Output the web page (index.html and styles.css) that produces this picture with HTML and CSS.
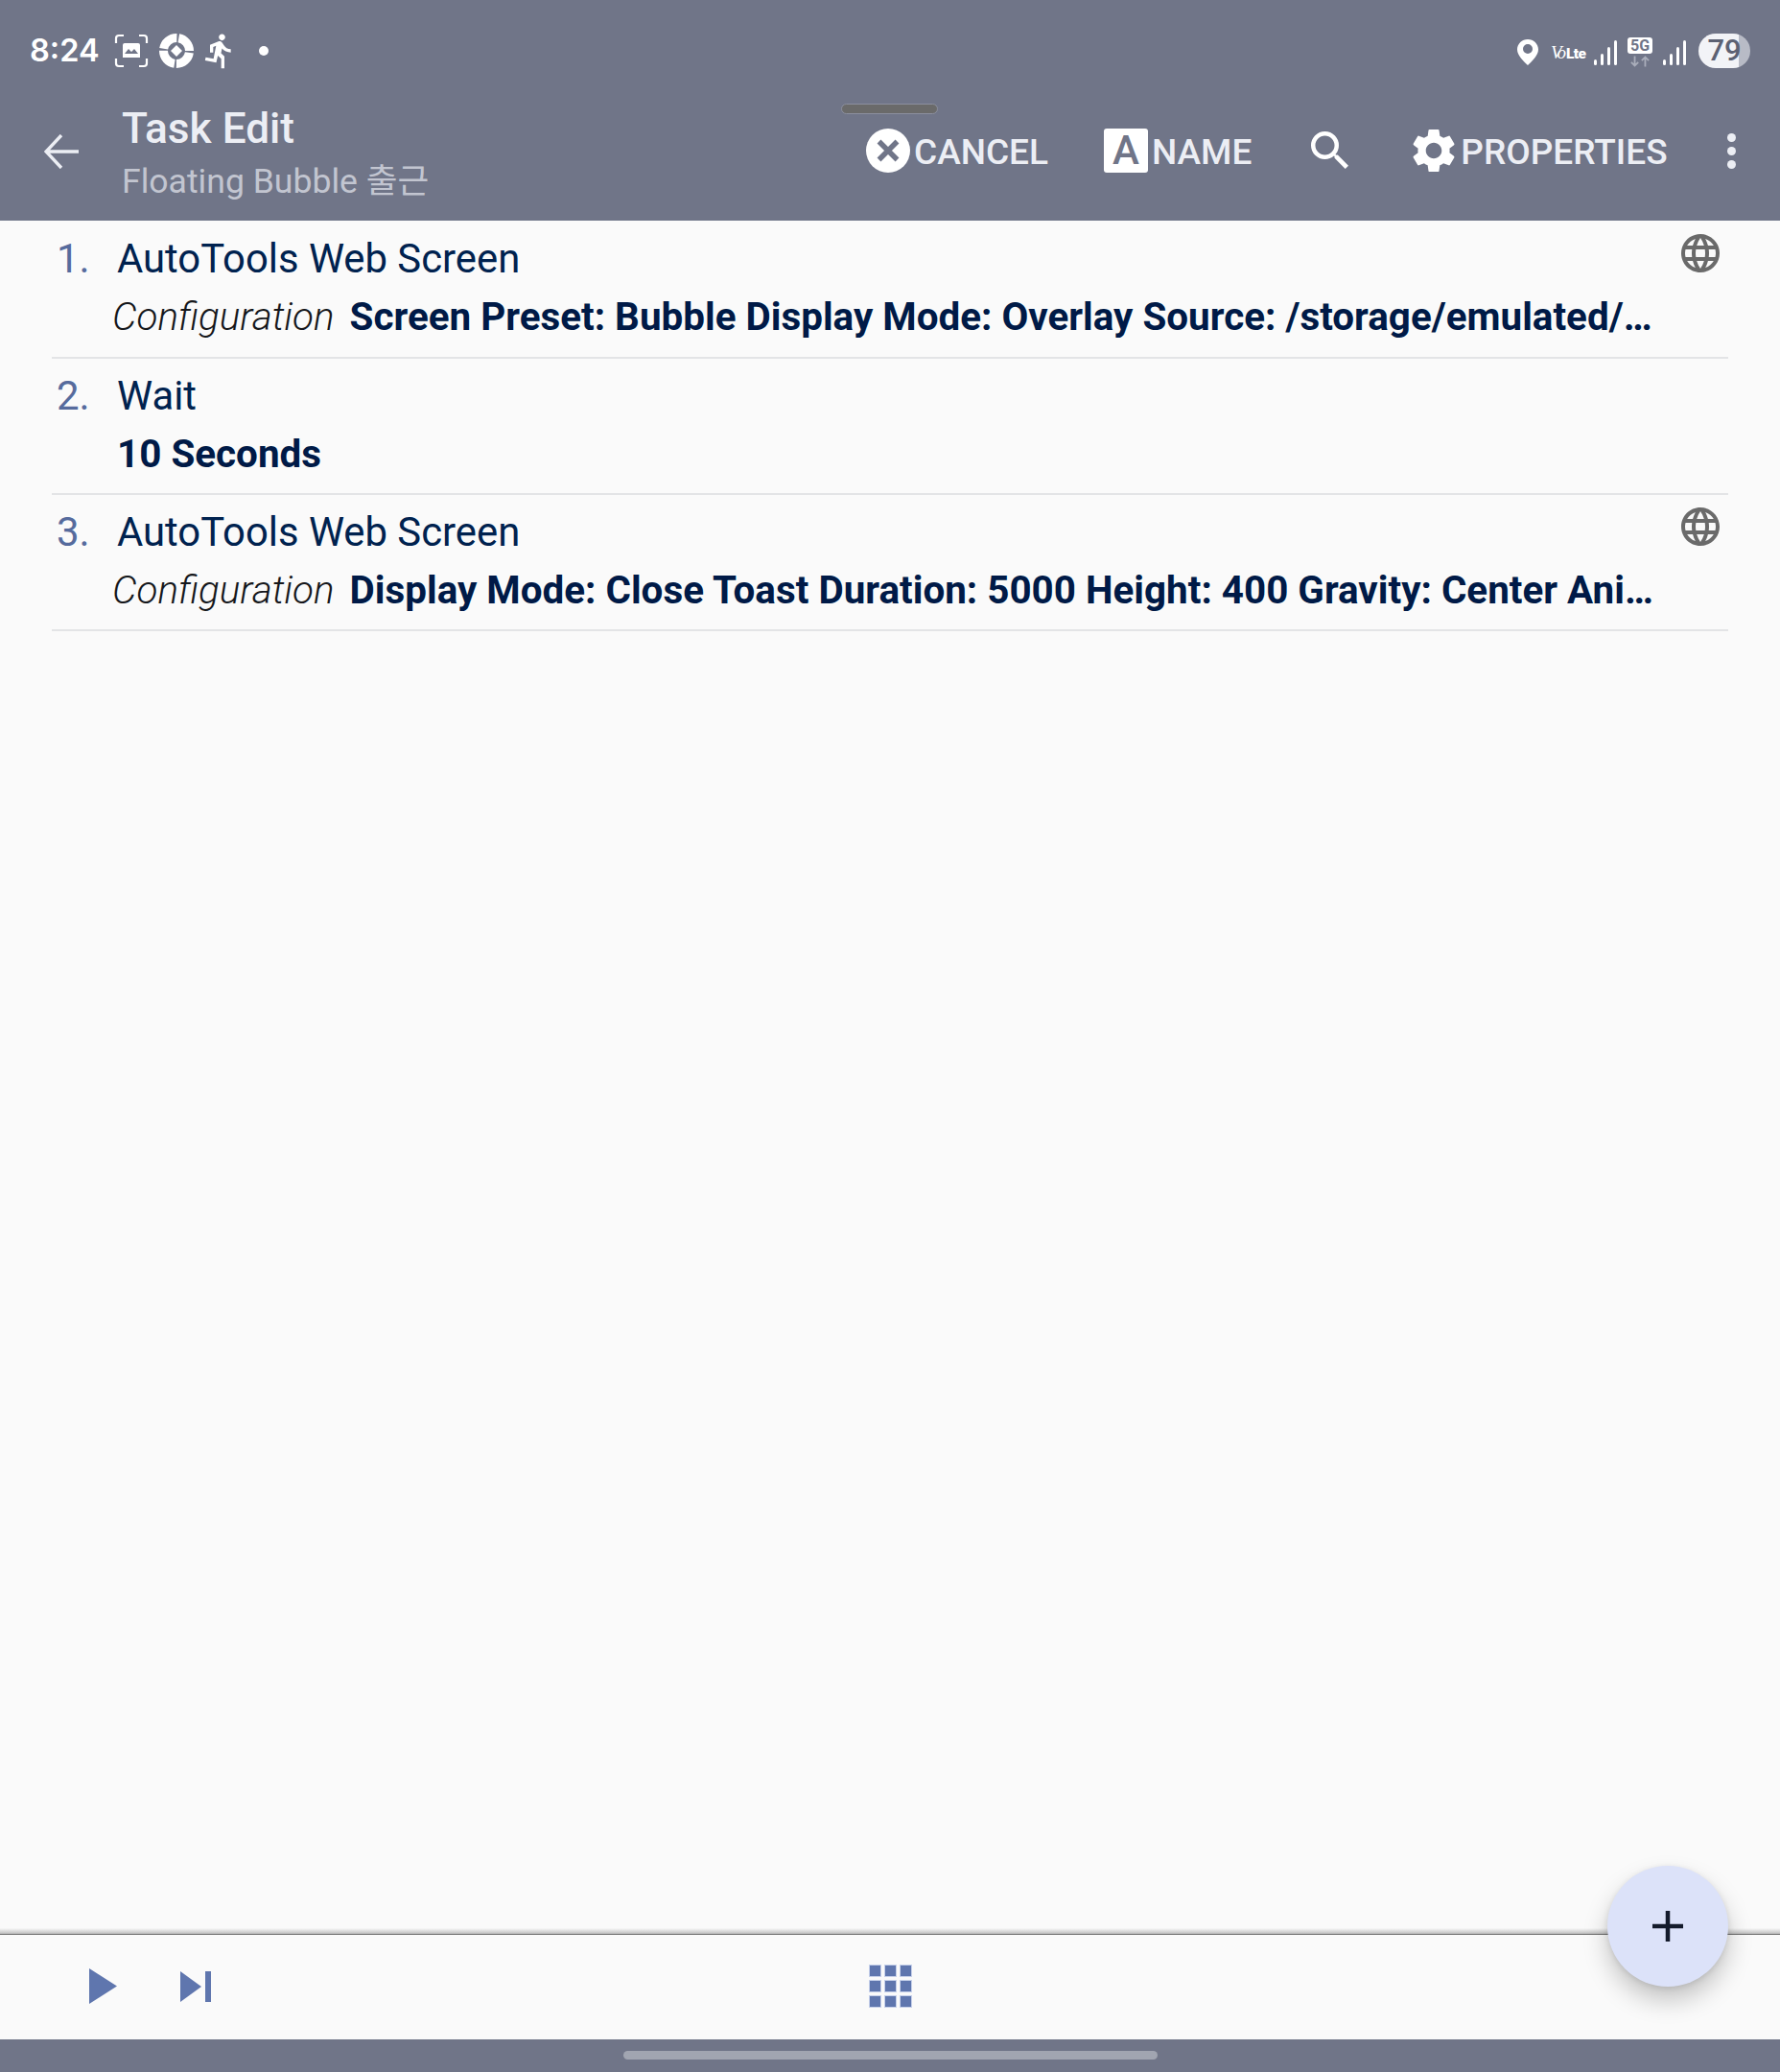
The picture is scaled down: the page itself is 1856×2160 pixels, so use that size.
FILE: index.html
```html
<!DOCTYPE html>
<html lang="en">
<head>
<meta charset="utf-8">
<title>Task Edit</title>
<link rel="stylesheet" href="styles.css">
</head>
<body>
<div class="page">
  <header class="header">
    <div class="status">
      <div class="status-left">
        <span class="time">8:24</span>
        <svg class="ic-shot" viewBox="0 0 36 36"><path d="M2 10V5a3 3 0 0 1 3-3h5M26 2h5a3 3 0 0 1 3 3v5M34 26v5a3 3 0 0 1-3 3h-5M10 34H5a3 3 0 0 1-3-3v-5" fill="none" stroke="#fff" stroke-width="2.2"/><path d="M9 12a2 2 0 0 1 2-2h14a2 2 0 0 1 2 2v13H9z" fill="#fff"/><path d="M11 21l4-5 3 3 3-3 4 5z" fill="#707588"/></svg>
        <svg class="ic-target" viewBox="0 0 36 36"><circle cx="18" cy="18" r="13.5" fill="none" stroke="#fff" stroke-width="9" stroke-dasharray="19.2 2" stroke-dashoffset="-2"/><path d="M18 12l6 6-6 6-6-6z" fill="#fff"/></svg>
        <svg class="ic-run" viewBox="0 0 24 24"><path fill="#fff" d="M13.49 5.48c1.1 0 2-.9 2-2s-.9-2-2-2-2 .9-2 2 .9 2 2 2zm-3.6 13.9l1-4.4 2.1 2v6h2v-7.5l-2.1-2 .6-3c1.3 1.5 3.3 2.5 5.5 2.5v-2c-1.9 0-3.5-1-4.3-2.4l-1-1.6c-.4-.6-1-1-1.7-1-.3 0-.5.1-.8.1l-5.2 2.2v4.7h2v-3.4l1.8-.7-1.6 8.1-4.9-1-.4 2 7 1.4z"/></svg>
        <span class="status-dot"></span>
      </div>
      <div class="status-right">
        <svg class="ic-pin" viewBox="0 0 22 27"><path fill="#fff" fill-rule="evenodd" d="M11 0C5 0 0 4.700 0 10.500 0 17 7 23 11 27c4-4 11-10 11-16.500C22 4.700 17 0 11 0zm0 15a5 5 0 1 1 0-10 5 5 0 0 1 0 10z"/></svg>
        <span class="volte"><i>Vo</i><b>Lte</b></span>
        <svg class="ic-signal" viewBox="0 0 24 26"><rect x="0" y="20" width="3" height="6" rx="1.500"/><rect x="7" y="14" width="3" height="12" rx="1.500"/><rect x="14" y="7" width="3" height="19" rx="1.500"/><rect x="21" y="0" width="3" height="26" rx="1.500"/></svg>
        <span class="fiveg"><span class="fiveg-label">5G</span><svg class="ic-arrows" viewBox="0 0 22 12"><path d="M5 0v10M1 7l4 4 4-4M17 12V2M13 5l4-4 4 4" fill="none" stroke="#a9adba" stroke-width="2"/></svg></span>
        <svg class="ic-signal" viewBox="0 0 24 26"><rect x="0" y="20" width="3" height="6" rx="1.500"/><rect x="7" y="14" width="3" height="12" rx="1.500"/><rect x="14" y="7" width="3" height="19" rx="1.500"/><rect x="21" y="0" width="3" height="26" rx="1.500"/></svg>
        <span class="battery">79</span>
      </div>
    </div>
    <div class="appbar">
      <svg class="ic-back" viewBox="0 0 36 36"><path d="M36 18H3M18 1L2 18l16 17" fill="none" stroke="#eceef4" stroke-width="3.400"/></svg>
      <div class="titles">
        <div class="title">Task Edit</div>
        <div class="subtitle">Floating Bubble 출근</div>
      </div>
      <div class="actions">
        <div class="action action-cancel">
          <svg class="ic-cancel" viewBox="0 0 46 46"><circle cx="23" cy="23" r="23" fill="#fff"/><path d="M13.500 13.500l19 19M32.500 13.500l-19 19" stroke="#707588" stroke-width="5.500"/></svg>
          <span class="action-text">CANCEL</span>
        </div>
        <div class="action action-name">
          <span class="name-box">A</span>
          <span class="action-text">NAME</span>
        </div>
        <svg class="ic-search" viewBox="3 3 17.490 17.490"><path fill="#fff" d="M15.500 14h-.79l-.28-.27A6.471 6.471 0 0 0 16 9.500 6.500 6.500 0 1 0 9.500 16c1.610 0 3.090-.59 4.230-1.570l.27.28v.79l5 4.990L20.490 19l-4.990-5zm-6 0C7.010 14 5 11.990 5 9.500S7.010 5 9.500 5 14 7.010 14 9.500 11.990 14 9.500 14z"/></svg>
        <div class="action action-props">
          <svg class="ic-gear" viewBox="2.500 2 19 20"><path fill="#fff" d="M19.140 12.940c.04-.3.06-.61.06-.94 0-.32-.02-.64-.07-.94l2.030-1.580a.49.49 0 0 0 .12-.61l-1.920-3.320a.488.488 0 0 0-.59-.22l-2.390.96c-.5-.38-1.030-.7-1.620-.94l-.36-2.540a.484.484 0 0 0-.48-.41h-3.840c-.24 0-.43.17-.47.41l-.36 2.540c-.59.24-1.130.57-1.620.94l-2.390-.96c-.22-.08-.47 0-.59.22L2.740 8.870c-.12.21-.08.47.12.61l2.030 1.580c-.05.3-.09.63-.09.94s.02.64.07.94l-2.030 1.580a.49.49 0 0 0-.12.61l1.920 3.320c.12.22.37.29.59.22l2.390-.96c.5.38 1.030.7 1.620.94l.36 2.540c.05.24.24.41.48.41h3.840c.24 0 .44-.17.47-.41l.36-2.540c.59-.24 1.130-.56 1.620-.94l2.390.96c.22.08.47 0 .59-.22l1.920-3.320c.12-.22.07-.47-.12-.61l-2.010-1.580zM12 15.600c-1.980 0-3.600-1.620-3.600-3.600s1.620-3.600 3.600-3.600 3.600 1.620 3.600 3.600-1.620 3.600-3.600 3.600z"/></svg>
          <span class="action-text">PROPERTIES</span>
        </div>
        <span class="overflow"><i></i><i></i><i></i></span>
      </div>
    </div>
    <span class="handle"></span>
  </header>

  <main class="list">
    <section class="row">
      <div class="row-head">
        <span class="num">1.</span>
        <span class="name">AutoTools Web Screen</span>
        <svg class="ic-globe" viewBox="2 2 20 20"><path fill="#6a6a6a" d="M11.990 2C6.470 2 2 6.480 2 12s4.470 10 9.990 10C17.520 22 22 17.520 22 12S17.520 2 11.990 2zm6.930 6h-2.950c-.32-1.250-.78-2.450-1.380-3.560 1.840.63 3.370 1.910 4.330 3.560zM12 4.040c.83 1.200 1.480 2.530 1.910 3.960h-3.820c.43-1.430 1.080-2.760 1.910-3.960zM4.260 14C4.100 13.360 4 12.690 4 12s.1-1.360.26-2h3.380c-.08.66-.14 1.320-.14 2s.06 1.340.14 2H4.260zm.82 2h2.950c.32 1.250.78 2.450 1.380 3.560-1.840-.63-3.370-1.900-4.330-3.560zm2.950-8H5.080c.96-1.660 2.490-2.930 4.330-3.560C8.810 5.550 8.350 6.750 8.030 8zM12 19.960c-.83-1.200-1.480-2.530-1.910-3.960h3.820c-.43 1.430-1.080 2.760-1.910 3.960zM14.340 14H9.660c-.09-.66-.16-1.320-.16-2s.07-1.350.16-2h4.680c.09.65.16 1.320.16 2s-.07 1.340-.16 2zm.25 5.560c.6-1.110 1.060-2.310 1.380-3.560h2.950c-.96 1.650-2.490 2.930-4.330 3.560zM16.360 14c.08-.66.14-1.320.14-2s-.06-1.340-.14-2h3.380c.16.64.26 1.310.26 2s-.1 1.360-.26 2h-3.380z"/></svg>
      </div>
      <div class="row-detail">
        <span class="label">Configuration</span>
        <span class="value">Screen Preset: Bubble Display Mode: Overlay Source: /storage/emulated/…</span>
      </div>
    </section>
    <section class="row">
      <div class="row-head">
        <span class="num">2.</span>
        <span class="name">Wait</span>
      </div>
      <div class="row-detail row-detail-plain">
        <span class="value">10 Seconds</span>
      </div>
    </section>
    <section class="row">
      <div class="row-head">
        <span class="num">3.</span>
        <span class="name">AutoTools Web Screen</span>
        <svg class="ic-globe" viewBox="2 2 20 20"><path fill="#6a6a6a" d="M11.990 2C6.470 2 2 6.480 2 12s4.470 10 9.990 10C17.520 22 22 17.520 22 12S17.520 2 11.990 2zm6.930 6h-2.950c-.32-1.250-.78-2.450-1.380-3.560 1.840.63 3.370 1.910 4.330 3.560zM12 4.040c.83 1.200 1.480 2.530 1.910 3.960h-3.820c.43-1.430 1.080-2.760 1.910-3.960zM4.260 14C4.100 13.360 4 12.690 4 12s.1-1.360.26-2h3.380c-.08.66-.14 1.320-.14 2s.06 1.340.14 2H4.260zm.82 2h2.950c.32 1.250.78 2.450 1.380 3.560-1.840-.63-3.370-1.900-4.330-3.560zm2.950-8H5.080c.96-1.660 2.490-2.930 4.330-3.560C8.810 5.550 8.350 6.750 8.030 8zM12 19.960c-.83-1.200-1.480-2.530-1.910-3.960h3.820c-.43 1.430-1.080 2.760-1.910 3.960zM14.340 14H9.660c-.09-.66-.16-1.320-.16-2s.07-1.350.16-2h4.680c.09.65.16 1.320.16 2s-.07 1.340-.16 2zm.25 5.560c.6-1.110 1.060-2.310 1.380-3.560h2.950c-.96 1.650-2.490 2.930-4.330 3.560zM16.360 14c.08-.66.14-1.320.14-2s-.06-1.340-.14-2h3.380c.16.64.26 1.310.26 2s-.1 1.360-.26 2h-3.380z"/></svg>
      </div>
      <div class="row-detail">
        <span class="label">Configuration</span>
        <span class="value">Display Mode: Close Toast Duration: 5000 Height: 400 Gravity: Center Ani…</span>
      </div>
    </section>
  </main>

  <footer class="footer">
    <div class="toolbar">
      <div class="toolbar-left">
        <svg class="ic-play" viewBox="0 0 29 37"><path fill="#5f76ae" d="M0 0l29 18.500L0 37z"/></svg>
        <svg class="ic-next" viewBox="0 0 32 32"><path fill="#5f76ae" d="M0 0l22 16L0 32zM26 0h6v32h-6z"/></svg>
      </div>
      <div class="grid-icon">
        <i></i><i></i><i></i><i></i><i></i><i></i><i></i><i></i><i></i>
      </div>
    </div>
    <div class="navbar"><span class="home"></span></div>
    <button class="fab" type="button" aria-label="Add">
      <svg class="ic-plus" viewBox="0 0 32 32"><path d="M16 0v32M0 16h32" stroke="#141b2c" stroke-width="4.500"/></svg>
    </button>
  </footer>
</div>
</body>
</html>
```

FILE: styles.css
```css
* { box-sizing: border-box; }
html, body { margin: 0; padding: 0; }
body { background: #fafafa; font-family: Roboto, "Noto Sans CJK KR", sans-serif; }

.page {
  width: 1856px;
  height: 2160px;
  display: flex;
  flex-direction: column;
  background: #fafafa;
  overflow: hidden;
}

/* header */
.header {
  position: relative;
  height: 230px;
  flex: none;
  background: #707588;
  display: flex;
  flex-direction: column;
}

.status {
  height: 106px;
  padding: 35px 31px 0 31px;
  display: flex;
  justify-content: space-between;
  align-items: flex-start;
}
.status-left { display: flex; align-items: center; height: 36px; }
.time { font-family: Inter, Roboto, sans-serif; font-size: 32.500px; line-height: 36px; font-weight: 600; color: #fff; width: 88px; }
.ic-shot { width: 36px; height: 36px; }
.ic-target { width: 36px; height: 36px; margin-left: 11px; }
.ic-run { width: 40px; height: 40px; margin-left: 7px; }
.status-dot { width: 10px; height: 10px; border-radius: 50%; background: #fff; margin-left: 21px; }

.status-right { display: flex; align-items: center; height: 36px; }
.ic-pin { width: 22px; height: 27px; margin-top: 2px; }
.volte { width: 35px; margin-left: 13px; color: #fff; display: flex; align-items: baseline; margin-top: 4px; white-space: nowrap; }
.volte i { font-family: "Liberation Serif", serif; font-size: 19px; line-height: 20px; font-weight: 400; letter-spacing: -3px; }
.volte b { font-family: Roboto, sans-serif; font-size: 15.500px; line-height: 20px; font-weight: 900; letter-spacing: -0.6px; margin-left: 3px; }
.ic-signal { width: 24px; height: 26px; margin-left: 10px; margin-top: 4px; fill: #fff; }
.fiveg { width: 26px; margin-left: 11px; display: flex; flex-direction: column; align-items: center; margin-top: 3px; }
.fiveg-label { width: 26px; height: 17px; border-radius: 3px; background: #fff; color: #707588; font-size: 16px; line-height: 17px; font-weight: 700; text-align: center; }
.ic-arrows { width: 20px; height: 12px; margin-top: 2px; }
.status-right .ic-signal:last-of-type { margin-left: 11px; }
.battery {
  width: 54px;
  height: 36px;
  margin-left: 13px;
  border-radius: 18px;
  background: linear-gradient(90deg, #f2f3f7 0, #f2f3f7 42px, #b8bbc6 42px);
  color: #5c6173;
  font-size: 31px;
  line-height: 36px;
  font-weight: 500;
  text-align: center;
}

.appbar {
  flex: 1;
  display: flex;
  align-items: flex-start;
  padding-left: 46px;
}
.ic-back { width: 36px; height: 36px; margin-top: 34px; flex: none; }
.titles { margin-left: 46px; width: 600px; flex: none; }
.title { font-size: 44.200px; line-height: 52px; font-weight: 500; color: #eceef4; margin-top: 2px; margin-left: -1px; }
.subtitle { font-size: 35.600px; line-height: 48px; color: #c2c5d0; margin-top: 5px; margin-left: -1px; white-space: nowrap; }

.actions { display: flex; align-items: flex-start; position: absolute; left: 0; right: 0; bottom: 0; top: 106px; }
.action { display: flex; align-items: center; color: #eceef4; font-size: 37px; line-height: 46px; font-weight: 500; height: 46px; margin-top: 28px; white-space: nowrap; }
.action-text { padding-top: 4px; }
.action-cancel { margin-left: 903px; }
.action-cancel .action-text { margin-left: 4px; }
.ic-cancel { width: 46px; height: 46px; }
.action-name { margin-left: 58px; }
.action-name .action-text { margin-left: 4px; }
.name-box { width: 46px; height: 46px; border-radius: 3px; background: #fff; color: #707588; text-align: center; font-size: 42px; font-weight: 500; line-height: 46px; }
.ic-search { width: 39px; height: 39px; margin: 31px 0 0 62px; flex: none; }
.action-props { margin-left: 67px; }
.ic-gear { width: 44px; height: 46px; }
.action-props .action-text { margin-left: 6px; }
.overflow { display: flex; flex-direction: column; gap: 5px; margin: 33px 0 0 62px; }
.overflow i { display: block; width: 9px; height: 9px; border-radius: 50%; background: #eceef4; }

.handle {
  position: absolute;
  left: 877px;
  top: 108px;
  width: 101px;
  height: 11px;
  border-radius: 6px;
  background: #6a6a6a;
  border: 1px solid #8b8f9e;
}

/* list */
.list { flex: 1; padding: 0 54px; }
.row { height: 142px; border-bottom: 2px solid #e3e4e6; padding-top: 8px; }
.row:first-child { height: 144px; padding-top: 9px; }
.row-head { display: flex; align-items: flex-start; height: 62px; position: relative; }
.num { width: 68px; padding-left: 5px; font-size: 42px; line-height: 61px; font-weight: 400; color: #566b9d; flex: none; }
.name { font-size: 41.800px; line-height: 61px; font-weight: 400; color: #00224f; flex: 1; }
.ic-globe { width: 40px; height: 40px; position: absolute; right: 9px; top: 5px; }
.row-detail { display: flex; align-items: baseline; padding-left: 63px; width: 1672px; }
.row-detail-plain { padding-left: 68px; }
.label { font-size: 40.400px; line-height: 60px; font-weight: 300; font-style: italic; color: #15171b; flex: none; }
.value { font-size: 40.400px; line-height: 60px; font-weight: 700; color: #001a47; margin-left: 16px; flex: 1; min-width: 0; white-space: nowrap; }
.row-detail-plain .value { margin-left: 0; }

/* footer */
.footer { flex: none; height: 150px; position: relative; display: flex; flex-direction: column; }
.toolbar {
  height: 116px;
  position: relative;
  background: linear-gradient(180deg, #fafafa 0, #bdbdbd 6px, #6e6e6e 6px, #6e6e6e 7px, #fafafa 7px);
  display: flex;
  align-items: center;
  justify-content: center;
}
.toolbar-left { position: absolute; left: 93px; top: 42px; display: flex; align-items: center; gap: 66px; }
.ic-play { width: 29px; height: 37px; }
.ic-next { width: 32px; height: 32px; }
.grid-icon { display: grid; grid-template-columns: repeat(3, 11px); grid-auto-rows: 11px; gap: 5px; margin-top: 4px; }
.grid-icon i { display: block; background: #5f76ae; outline: 1px solid #c6d0ea; }
.navbar { flex: 1; background: #707588; position: relative; display: flex; justify-content: center; align-items: flex-start; padding-top: 12px; }
.home { display: block; width: 557px; height: 9px; border-radius: 5px; background: #a1a5b1; }

.fab {
  position: absolute;
  left: 1675.500px;
  top: -65px;
  width: 126px;
  height: 126px;
  border: 0;
  padding: 0;
  border-radius: 50%;
  background: #dce2f9;
  box-shadow: 0 14px 26px rgba(0, 0, 0, 0.22), 0 2px 6px rgba(0, 0, 0, 0.1);
  display: flex;
  align-items: center;
  justify-content: center;
}
.ic-plus { width: 32px; height: 32px; }
```
